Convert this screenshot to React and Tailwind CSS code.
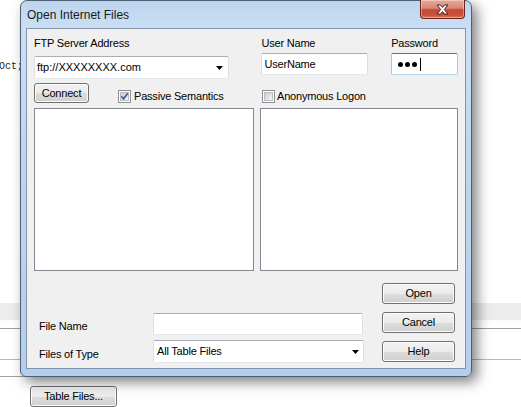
import React from "react";

const btn =
  "flex items-center justify-center rounded-[3px] border border-[#707070] bg-[linear-gradient(#f2f2f2_0%,#ebebeb_50%,#dddddd_51%,#cfcfcf_100%)] shadow-[inset_0_0_0_1px_#fcfcfc] text-[11px] leading-none text-black";
const field =
  "flex items-center rounded-[2px] border border-[#abadb3] border-x-[#dbdfe6] border-b-[#e3e9ef] bg-white text-[11px] text-black";

function Arrow() {
  return (
    <svg width="7" height="4" viewBox="0 0 7 4" className="shrink-0">
      <polygon points="0,0 7,0 3.5,4" fill="#000" />
    </svg>
  );
}

function Check({ checked }) {
  return (
    <span className="flex h-[13px] w-[13px] shrink-0 items-center justify-center border border-[#8e8f8f] bg-white">
      <span className="relative flex h-[9px] w-[9px] items-center justify-center border border-[#b9bcc2] bg-[linear-gradient(135deg,#c9ccd2,#f5f5f5)]">
        {checked && (
          <svg width="9" height="9" viewBox="0 0 9 9" className="absolute -left-px -top-px">
            <path d="M1.5 4.3 L3.6 6.8 L7.8 1.2" stroke="#4a5f8e" strokeWidth="1.7" fill="none" />
          </svg>
        )}
      </span>
    </span>
  );
}

function CloseButton() {
  return (
    <div className="-mt-px mr-px flex h-[19px] w-[45px] items-center justify-center rounded-b-[4px] border border-t-0 border-[#6b231a] bg-[linear-gradient(#e9a99b_0%,#d98675_45%,#c44a33_55%,#c9533a_85%,#e07a5a_100%)] shadow-[inset_0_0_0_1px_rgba(255,255,255,0.35)]">
      <svg width="13" height="11" viewBox="0 0 13 11">
        <path
          d="M1 1 L4.5 1 L6.5 3.4 L8.5 1 L12 1 L8.3 5.5 L12 10 L8.5 10 L6.5 7.6 L4.5 10 L1 10 L4.7 5.5 Z"
          fill="#fff"
          stroke="#3a2220"
          strokeWidth="1"
          strokeLinejoin="round"
        />
      </svg>
    </div>
  );
}

function Dialog() {
  return (
    <div className="absolute left-[20px] top-0 flex h-[377px] w-[452px] flex-col rounded-t-[7px] rounded-b-[6px] border border-[#4f5f73] bg-[linear-gradient(180deg,#bcd5ef_0%,#cce0f5_8%,#bed6ef_40%,#b4cfec_100%)] px-[5px] pb-[7px] shadow-[5px_5px_13px_rgba(0,0,0,0.5)]">
      {/* title bar */}
      <div className="flex h-[27px] items-start justify-between">
        <span className="self-center pl-px font-['Liberation_Sans',Arial,sans-serif] text-[12px] text-[#1b1b1b]">
          Open Internet Files
        </span>
        <CloseButton />
      </div>

      {/* client */}
      <div className="flex h-[341px] w-[440px] flex-col border border-[#8395ab] bg-[#f0f0f0] px-[7px] pt-[8px] font-['Liberation_Sans',Arial,sans-serif] text-[11px] leading-[13px] tracking-[-0.2px] text-black">
        <div className="flex items-start">
          <div className="flex w-[196px] flex-col">
            <span>FTP Server Address</span>
            <div className={`${field} mt-[6px] h-[23px] justify-between pl-[2px] pr-[5px]`}>
              <span className="tracking-normal">ftp://XXXXXXXX.com</span>
              <Arrow />
            </div>
          </div>
          <div className="ml-[32px] flex w-[107px] flex-col">
            <span>User Name</span>
            <div className={`${field} mt-[3px] h-[22px] pl-[2px]`}>UserName</div>
          </div>
          <div className="ml-[23px] flex w-[67px] flex-col">
            <span>Password</span>
            <div className="mt-[3px] flex h-[22px] items-center gap-[2px] rounded-[2px] border border-[#3d7bad] border-x-[#a4c9e3] border-b-[#b7d9ed] bg-white pl-[6px]">
              <span className="h-[5px] w-[5px] rounded-full bg-black" />
              <span className="h-[5px] w-[5px] rounded-full bg-black" />
              <span className="h-[5px] w-[5px] rounded-full bg-black" />
              <span className="ml-[1px] h-[13px] w-px bg-black" />
            </div>
          </div>
        </div>

        <div className="mt-[4px] flex items-start">
          <div className="flex w-[228px] items-start">
            <div className={`${btn} h-[20px] w-[55px]`}>Connect</div>
            <label className="ml-[29px] mt-[7px] flex items-center gap-[3px]">
              <Check checked />
              <span>Passive Semantics</span>
            </label>
          </div>
          <label className="mt-[7px] flex items-center gap-[2px]">
            <Check />
            <span>Anonymous Logon</span>
          </label>
        </div>

        <div className="mt-[5px] flex gap-[6px]">
          <div className="h-[163px] w-[221px] border border-[#828790] bg-white" />
          <div className="h-[163px] w-[198px] border border-[#828790] bg-white" />
        </div>

        <div className="mt-[12px] flex">
          <div className="flex w-[348px] flex-col pt-[30px]">
            <div className="flex items-center">
              <span className="w-[119px] pl-[5px] pt-[4px]">File Name</span>
              <div className={`${field} h-[22px] w-[210px]`} />
            </div>
            <div className="mt-[5px] flex items-center">
              <span className="w-[119px] pl-[5px] pt-[6px]">Files of Type</span>
              <div className={`${field} h-[23px] w-[211px] justify-between pl-[3px] pr-[4px]`}>
                <span>All Table Files</span>
                <Arrow />
              </div>
            </div>
          </div>
          <div className="flex w-[73px] flex-col gap-[8px]">
            <div className={`${btn} h-[21px] border-[#3c7fb1] shadow-[inset_0_0_0_1px_#8fd5f7]`}>Open</div>
            <div className={`${btn} h-[21px]`}>Cancel</div>
            <div className={`${btn} h-[21px]`}>Help</div>
          </div>
        </div>
      </div>
    </div>
  );
}

export default function App() {
  return (
    <div className="relative h-[407px] w-[521px] overflow-hidden bg-white font-['Liberation_Sans',Arial,sans-serif]">
      {/* underlying application */}
      <div className="flex h-full flex-col">
        <div className="-ml-px mt-[60px] font-['Liberation_Mono',monospace] text-[10px] leading-[13px] text-[#222]">
          Oct;
        </div>
        <div className="mt-[230px] h-[17px] bg-[#ececec]" />
        <div className="h-[8px] border-t border-[#fbfbfb]" />
        <div className="h-px bg-[#a0a0a0]" />
        <div className="h-[30px]" />
        <div className="h-px bg-[#b9b9b9]" />
        <div className="mt-[16px] h-px w-[133px] bg-[#a0a0a0]" />
        <div className={`${btn} ml-[30px] mt-[9px] h-[21px] w-[87px] tracking-[-0.2px]`}>Table Files...</div>
      </div>
      <Dialog />
    </div>
  );
}
